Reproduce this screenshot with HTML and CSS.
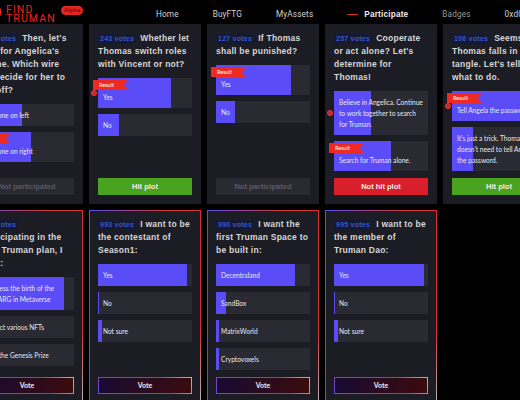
FILE: index.html
```html
<!DOCTYPE html>
<html lang="en">
<head>
<meta charset="utf-8">
<title>Find Truman</title>
<link rel="stylesheet" href="styles.css">
</head>
<body>
<header class="top">
  <div class="brand">
    <svg class="mark" width="4" height="16" viewBox="0 0 4 16"><path d="M-6 1.5a6.5 6.5 0 0 1 0 13" fill="none" stroke="#e8241f" stroke-width="2"/></svg>
    <div class="wordmark">FIND<br>TRUMAN</div>
    <span class="alpha">Alpha</span>
  </div>
  <nav class="nav">
    <a>Home</a><a>BuyFTG</a><a>MyAssets</a>
    <a class="current"><i class="dash"></i>Participate</a>
    <a class="dim">Badges</a><a>0xd0c4…</a>
  </nav>
</header>
<main class="board">
  <section class="row done">
    <article class="card">
      <p class="title"><span class="votes">218 votes</span>Then, let's wait for Angelica's phone. Which wire<br>we decide for her to<br>cut off?</p>
      <div class="opts">
        <div class="opt"><b class="fill" style="width:45%"></b><span>The one on left</span></div>
        <div class="opt won"><b class="fill" style="width:54%"></b><em class="flag">Result</em><span>The one on right</span></div>
      </div>
      <div class="btn none">Not participated</div>
    </article>
    <article class="card">
      <p class="title"><span class="votes">243 votes</span>Whether let Thomas switch roles with Vincent or not?</p>
      <div class="opts">
        <div class="opt won"><b class="fill" style="width:78%"></b><em class="flag">Result</em><i class="dot"></i><span>Yes</span></div>
        <div class="opt"><b class="fill" style="width:22%"></b><span>No</span></div>
      </div>
      <div class="btn hit">Hit plot</div>
    </article>
    <article class="card">
      <p class="title"><span class="votes">127 votes</span>If Thomas shall be punished?</p>
      <div class="opts">
        <div class="opt won"><b class="fill" style="width:80%"></b><em class="flag">Result</em><span>Yes</span></div>
        <div class="opt"><b class="fill" style="width:20%"></b><span>No</span></div>
      </div>
      <div class="btn none">Not participated</div>
    </article>
    <article class="card">
      <p class="title"><span class="votes">257 votes</span>Cooperate or act alone? Let's determine for Thomas!</p>
      <div class="opts">
        <div class="opt"><b class="fill" style="width:39%"></b><i class="dot"></i><span>Believe in Angelica. Continue to work together to search for Truman.</span></div>
        <div class="opt won"><b class="fill" style="width:61%"></b><em class="flag">Result</em><span>Search for Truman alone.</span></div>
      </div>
      <div class="btn miss">Not hit plot</div>
    </article>
    <article class="card">
      <p class="title"><span class="votes">106 votes</span>Seems Thomas falls in a tangle. Let's tell him what to do.</p>
      <div class="opts">
        <div class="opt won"><b class="fill" style="width:78%"></b><em class="flag">Result</em><i class="dot"></i><span>Tell Angela the password.</span></div>
        <div class="opt"><b class="fill" style="width:22%"></b><span>It's just a trick. Thomas doesn't need to tell Angela the password.</span></div>
      </div>
      <div class="btn hit">Hit plot</div>
    </article>
  </section>
  <section class="row open">
    <article class="card live">
      <p class="title"><span class="votes">991 votes</span>Participating in the Find Truman plan, I want:</p>
      <div class="opts">
        <div class="opt"><b class="fill" style="width:89%"></b><span>Witness the birth of the<br>first ARG in Metaverse</span></div>
        <div class="opt"><span>Collect various NFTs</span></div>
        <div class="opt"><span>Win the Genesis Prize</span></div>
      </div>
      <div class="btn vote">Vote</div>
    </article>
    <article class="card live">
      <p class="title"><span class="votes">993 votes</span>I want to be the contestant of Season1:</p>
      <div class="opts">
        <div class="opt"><b class="fill" style="width:95%"></b><span>Yes</span></div>
        <div class="opt"><b class="fill" style="width:1%"></b><span>No</span></div>
        <div class="opt"><b class="fill" style="width:4%"></b><span>Not sure</span></div>
      </div>
      <div class="btn vote">Vote</div>
    </article>
    <article class="card live">
      <p class="title"><span class="votes">990 votes</span>I want the first Truman Space to be built in:</p>
      <div class="opts">
        <div class="opt"><b class="fill" style="width:84%"></b><span>Decentraland</span></div>
        <div class="opt"><b class="fill" style="width:11%"></b><span>SandBox</span></div>
        <div class="opt"><b class="fill" style="width:3%"></b><span>MatrixWorld</span></div>
        <div class="opt"><b class="fill" style="width:3%"></b><span>Cryptovoxels</span></div>
      </div>
      <div class="btn vote">Vote</div>
    </article>
    <article class="card live">
      <p class="title"><span class="votes">995 votes</span>I want to be the member of Truman Dao:</p>
      <div class="opts">
        <div class="opt"><b class="fill" style="width:96%"></b><span>Yes</span></div>
        <div class="opt"><b class="fill" style="width:1.5%"></b><span>No</span></div>
        <div class="opt"><b class="fill" style="width:4%"></b><span>Not sure</span></div>
      </div>
      <div class="btn vote">Vote</div>
    </article>
  </section>
</main>
</body>
</html>
```

FILE: styles.css
```css
* { box-sizing: border-box; }
html, body { margin: 0; height: 400px; overflow: hidden; background: #000; }
body { width: 520px; font-family: "Liberation Sans", Arial, sans-serif; color: #ddd; }

.top { height: 24px; display: flex; align-items: center; white-space: nowrap; }
.brand { display: flex; align-items: center; width: 156px; flex: none; }
.mark { flex: none; margin-right: 2px; }
.wordmark {
  font-family: Roboto, sans-serif; font-weight: 400; font-size: 10.5px; line-height: 9.5px;
  letter-spacing: 1.1px; color: #f0241f; margin-top: 4px; width: 55px;
}
.alpha {
  background: #e8241f; color: #7a1011; font-size: 6px; font-weight: 700;
  width: 22px; height: 9px; line-height: 9px; text-align: center; border-radius: 5px; margin-top: -3px;
}
.nav { display: flex; gap: 34px; font-family: Roboto, sans-serif; font-size: 8.2px; letter-spacing: .15px; color: #d4d4d4; margin-top: 4px; }
.current { font-family: "Liberation Sans", sans-serif; font-weight: 700; color: #eee; display: flex; align-items: center; gap: 6px; letter-spacing: .2px; }
.dash { width: 11px; height: 1px; background: #d9281f; }
.dim { color: #999; }

.board { margin-left: -29px; width: 590px; display: flex; flex-direction: column; gap: 6px; }
.row { display: flex; gap: 6px; }
.done { height: 180px; }
.open { height: 193px; }

.card {
  width: 112px; flex: none; display: flex; flex-direction: column;
  background: #1c1c24; border: 1px solid #1c1c24; padding: 7px 8px 8px;
}
.live {
  border-image: linear-gradient(150deg, #5a4cf0 0%, #d8302e 18%, #d8302e 72%, #b9b4b4 100%) 1;
}
.title {
  margin: 0 0 7px; font-size: 8.5px; line-height: 13px; font-weight: 700;
  letter-spacing: .25px; color: #d6d6d6;
}
.votes {
  display: inline-block; line-height: 10px; padding: 0 2px; margin-right: 4px;
  background: #141a33; color: #3d55c4; font-size: 7px; letter-spacing: .25px;
}
.opts { display: flex; flex-direction: column; gap: 6px; }
.opt {
  position: relative; background: #2a2a33; padding: 5.5px 4px 5.5px 5px;
  font-family: Lato, sans-serif; font-size: 6.6px; line-height: 11px; color: #e8e8ee;
}
.opt span { position: relative; }
.won { padding-top: 13.5px; }
.fill { position: absolute; left: 0; top: 0; bottom: 0; background: #5a4cf7; }
.flag {
  position: absolute; left: -5px; top: 2px; width: 35px; height: 10px; padding-left: 6px;
  background: #ee2a22; color: #fff; font-style: normal; font-size: 5.5px; line-height: 10px;
  clip-path: polygon(0 0, 100% 0, 88% 50%, 100% 100%, 0 100%);
}
.dot {
  position: absolute; left: -7px; top: 50%; width: 6px; height: 6px; margin-top: -3px;
  border-radius: 50%; background: #c9242a; border: 1px solid #f03a30;
}
.btn {
  margin-top: auto; height: 17px; flex: none; text-align: center; line-height: 17px;
  font-family: "Liberation Sans", sans-serif; font-size: 7.5px; font-weight: 700; color: #eee;
}
.none { background: #2a2a33; color: #5a5a64; }
.hit { background: #4aa31e; }
.miss { background: #d91f2b; }
.vote {
  font-family: Lato, sans-serif; font-size: 7px; line-height: 15px; border: 1px solid #d8302e;
  border-image: linear-gradient(60deg, #5a4cf0 0%, #d8302e 25%, #d8302e 70%, #b9b4b4 100%) 1;
  background: linear-gradient(90deg, #190a33, #3a0b0c);
}
```
